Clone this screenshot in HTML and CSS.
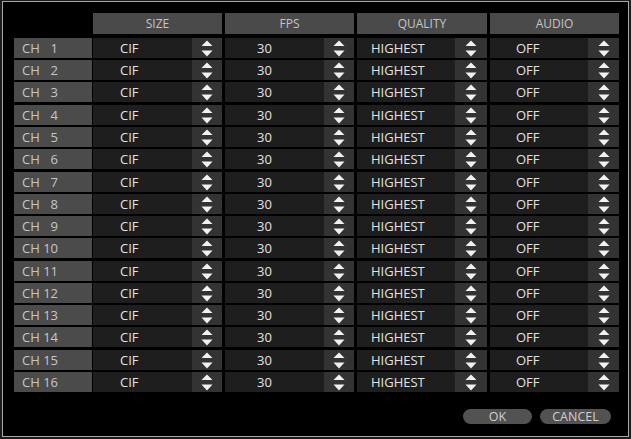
FILE: index.html
```html
<!DOCTYPE html>
<html>
<head>
<meta charset="utf-8">
<link rel="stylesheet" href="styles.css">
</head>
<body>
<div class="frame">
  <div class="grid" id="grid">
    <div class="corner"></div>
    <div class="head">SIZE</div>
    <div class="head">FPS</div>
    <div class="head">QUALITY</div>
    <div class="head">AUDIO</div>
  </div>
  <div class="footer">
    <button class="btn ok">OK</button>
    <button class="btn cancel">CANCEL</button>
  </div>
</div>
<script>
  var g = document.getElementById('grid');
  var arrow = '<svg width="12" height="17" viewBox="0 0 12 17"><polygon points="6,0.5 11.5,6 0.5,6" fill="#f2f2f2"/><polygon points="0.5,10.5 11.5,10.5 6,16.5" fill="#f2f2f2"/></svg>';
  var cols = [['CIF','c-size'],['30','c-fps'],['HIGHEST','c-qual'],['OFF','c-audio']];
  var html = '';
  for (var i = 1; i <= 16; i++) {
    var n = i < 10 ? '\u2007' + i : '' + i;
    html += '<div class="label">CH ' + n + '</div>';
    for (var j = 0; j < cols.length; j++) {
      html += '<div class="cell ' + cols[j][1] + '"><span class="val">' + cols[j][0] + '</span><span class="spin">' + arrow + '</span></div>';
    }
  }
  g.insertAdjacentHTML('beforeend', html);
</script>
</body>
</html>
```
FILE: styles.css
```css
html, body {
  margin: 0;
  padding: 0;
  background: #1c1c1c;
}
body {
  padding: 1px 0 0 2px;
  font-family: "Open Sans", "DejaVu Sans", sans-serif;
}
.frame {
  box-sizing: border-box;
  width: 627px;
  height: 436px;
  border: 1px solid #a8a8a8;
  background: #000;
  padding: 11px 0 0 11px;
  display: flex;
  flex-direction: column;
}
.grid {
  display: grid;
  grid-template-columns: 76px 129px 129px 130px 129px;
  grid-template-rows: 22.7px;
  grid-auto-rows: 20px;
  column-gap: 3px;
  row-gap: 2.27px;
}
.head {
  height: 21px;
  background: #4a4a4a;
  color: #c4c4c4;
  font-size: 12px;
  line-height: 21px;
  text-align: center;
}
.label {
  margin-right: -2px;
  background: #4b4b4b;
  color: #c6c6c6;
  font-size: 13px;
  line-height: 20px;
  padding-left: 8px;
  white-space: pre;
}
.cell {
  display: flex;
  background: #1e1e1e;
  color: #e2e2e2;
  font-size: 13px;
  line-height: 20px;
}
.val {
  flex: 1;
  white-space: nowrap;
}
.spin {
  width: 30px;
  background: #333;
  display: flex;
  align-items: center;
  justify-content: center;
}
.spin svg {
  display: block;
  margin-top: 1px;
}
.c-size .val { padding-left: 27px; }
.c-fps .val { padding-left: 32px; }
.c-qual .val { padding-left: 14px; }
.c-audio .val { padding-left: 26px; }
.c-qual .spin { width: 32px; }
.c-audio .spin { width: 31px; }
.footer {
  display: flex;
  justify-content: flex-end;
  gap: 8px;
  margin-top: 17px;
  padding-right: 17px;
}
.btn {
  height: 15px;
  border: none;
  border-radius: 8px;
  background: #525252;
  color: #cfcfcf;
  font-family: "Open Sans", "DejaVu Sans", sans-serif;
  font-size: 12.5px;
  line-height: 15px;
  padding: 0;
}
.ok { width: 69px; }
.cancel { width: 71px; }
```
